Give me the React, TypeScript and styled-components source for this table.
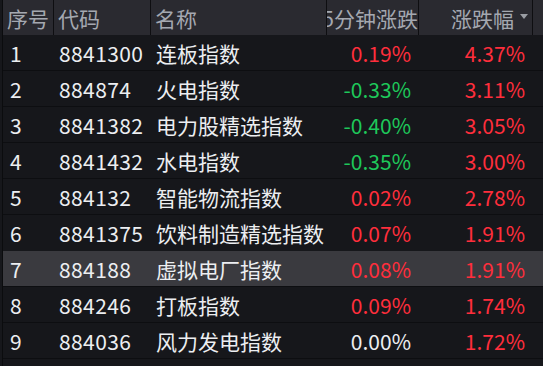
import React from "react";
import styled, { createGlobalStyle } from "styled-components";

const Global = createGlobalStyle`
  html, body { margin: 0; padding: 0; background: #16171b; }
  body { font-family: "Noto Sans CJK SC", "Noto Sans", sans-serif; overflow: hidden; }
`;

const Table = styled.div`
  width: 543px;
  height: 366px;
  overflow: hidden;
  background: #16171b;
  padding-left: 2px;
  box-sizing: border-box;
`;

const Inner = styled.div`
  border-left: 1px solid #0b0c0e;
  height: 100%;
`;

const cols = "51px 97px 176px 92px 114px 1fr";

const HeaderRow = styled.div`
  display: grid;
  grid-template-columns: ${cols};
  height: 35px;
  background: #2a2a30;
`;

const HeadCell = styled.div<{ $align?: "left" | "right"; $pr?: number }>`
  display: flex;
  align-items: center;
  justify-content: ${(p) => (p.$align === "right" ? "flex-end" : "flex-start")};
  padding-left: ${(p) => (p.$align === "right" ? 0 : 4)}px;
  padding-right: ${(p) => p.$pr ?? 0}px;
  border-right: 1px solid #0e0e11;
  overflow: hidden;
  white-space: nowrap;
  color: #a4a8b0;
  font-size: 21px;
  gap: 6px;
  &:last-child { border-right: none; }
`;

const Arrow = styled.span`
  width: 0;
  height: 0;
  border-left: 4.5px solid transparent;
  border-right: 4.5px solid transparent;
  border-top: 5px solid #9a9da3;
  margin-bottom: 2px;
  flex: none;
`;

const Row = styled.div<{ $active?: boolean }>`
  display: grid;
  grid-template-columns: ${cols};
  height: 36px;
  box-sizing: border-box;
  border-bottom: 1px solid #0d0e11;
  background: ${(p) => (p.$active ? "#3a3a3f" : "transparent")};
  ${(p) => (p.$active ? "border-top: 1px solid #16171b; margin-top: -1px; height: 37px;" : "")}
`;

const Cell = styled.div<{ $align?: "left" | "right"; $pl?: number; $color?: string; $spacing?: number }>`
  display: flex;
  align-items: center;
  justify-content: ${(p) => (p.$align === "right" ? "flex-end" : "flex-start")};
  padding-left: ${(p) => p.$pl ?? 5}px;
  padding-right: ${(p) => (p.$align === "right" ? 8 : 0)}px;
  white-space: nowrap;
  overflow: hidden;
  color: ${(p) => p.$color ?? "#eceef1"};
  font-size: 21px;
  letter-spacing: ${(p) => p.$spacing ?? 0}px;
`;

const RED = "#ff2e3c";
const GREEN = "#1ec85a";
const WHITE = "#eceef1";

const data = [
  ["1", "8841300", "连板指数", "0.19%", "4.37%"],
  ["2", "884874", "火电指数", "-0.33%", "3.11%"],
  ["3", "8841382", "电力股精选指数", "-0.40%", "3.05%"],
  ["4", "8841432", "水电指数", "-0.35%", "3.00%"],
  ["5", "884132", "智能物流指数", "0.02%", "2.78%"],
  ["6", "8841375", "饮料制造精选指数", "0.07%", "1.91%"],
  ["7", "884188", "虚拟电厂指数", "0.08%", "1.91%"],
  ["8", "884246", "打板指数", "0.09%", "1.74%"],
  ["9", "884036", "风力发电指数", "0.00%", "1.72%"],
];

const colorOf = (v: string) =>
  v.startsWith("-") ? GREEN : parseFloat(v) === 0 ? WHITE : RED;

export default function App() {
  return (
    <>
      <Global />
      <Table>
        <Inner>
          <HeaderRow>
            <HeadCell>序号</HeadCell>
            <HeadCell>代码</HeadCell>
            <HeadCell>名称</HeadCell>
            <HeadCell $align="right">5分钟涨跌</HeadCell>
            <HeadCell $align="right" $pr={4}>
              涨跌幅<Arrow />
            </HeadCell>
            <HeadCell />
          </HeaderRow>
          {data.map((r) => (
            <Row key={r[0]} $active={r[0] === "7"}>
              <Cell $pl={7}>{r[0]}</Cell>
              <Cell $spacing={0.4}>{r[1]}</Cell>
              <Cell>{r[2]}</Cell>
              <Cell $align="right" $color={colorOf(r[3])}>{r[3]}</Cell>
              <Cell $align="right" $color={colorOf(r[4])}>{r[4]}</Cell>
              <Cell />
            </Row>
          ))}
          <Row />
        </Inner>
      </Table>
    </>
  );
}
